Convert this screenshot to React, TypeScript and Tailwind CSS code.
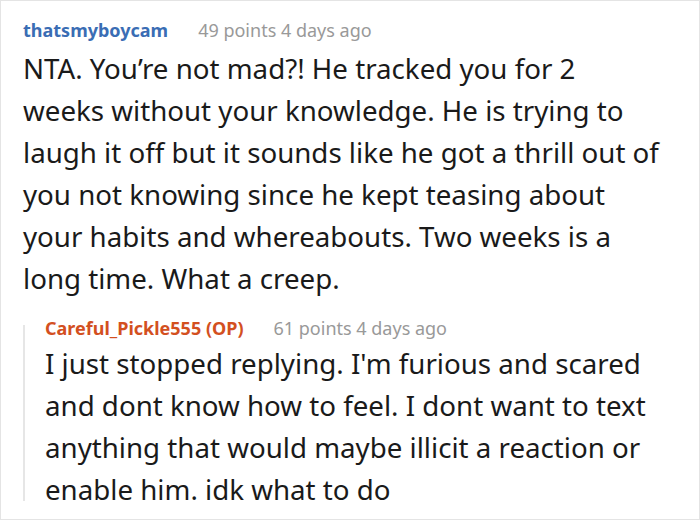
import React from "react";

export default function App() {
  return (
    <div
      className="w-[700px] h-[520px] box-border border border-[#e4e4e4] bg-white overflow-hidden pl-[22px] pt-[15px]"
      style={{ fontFamily: '"Noto Sans", "Open Sans", sans-serif' }}
    >
      <div className="w-[638px]">
        <div className="flex items-baseline text-[18px] leading-[28px]">
          <span className="font-bold text-[#3a6db4]">thatsmyboycam</span>
          <span className="ml-[30px] text-[#999999]">49 points 4 days ago</span>
        </div>
        <p className="mt-[3px] text-[27.7px] leading-[42px] text-[#1a1a1a]">
          NTA. You’re not mad?! He tracked you for 2 weeks without your knowledge. He is trying to laugh it off but it sounds like he got a thrill out of you not knowing since he kept teasing about your habits and whereabouts. Two weeks is a long time. What a creep.
        </p>
        <div className="mt-[15px] flex">
          <div className="w-[2px] shrink-0 bg-[#e6e6e6] mt-[11px] mb-[9px]" />
          <div className="pl-[20px] min-w-0 flex-1">
            <div className="flex items-baseline text-[18px] leading-[28px]">
              <span className="font-bold text-[#d3501f]">Careful_Pickle555 (OP)</span>
              <span className="ml-[30px] text-[#999999]">61 points 4 days ago</span>
            </div>
            <p className="text-[27.7px] leading-[42px] text-[#1a1a1a]">
              I just stopped replying. I'm furious and scared and dont know how to feel. I dont want to text anything that would maybe illicit a reaction or enable him. idk what to do
            </p>
          </div>
        </div>
      </div>
    </div>
  );
}
